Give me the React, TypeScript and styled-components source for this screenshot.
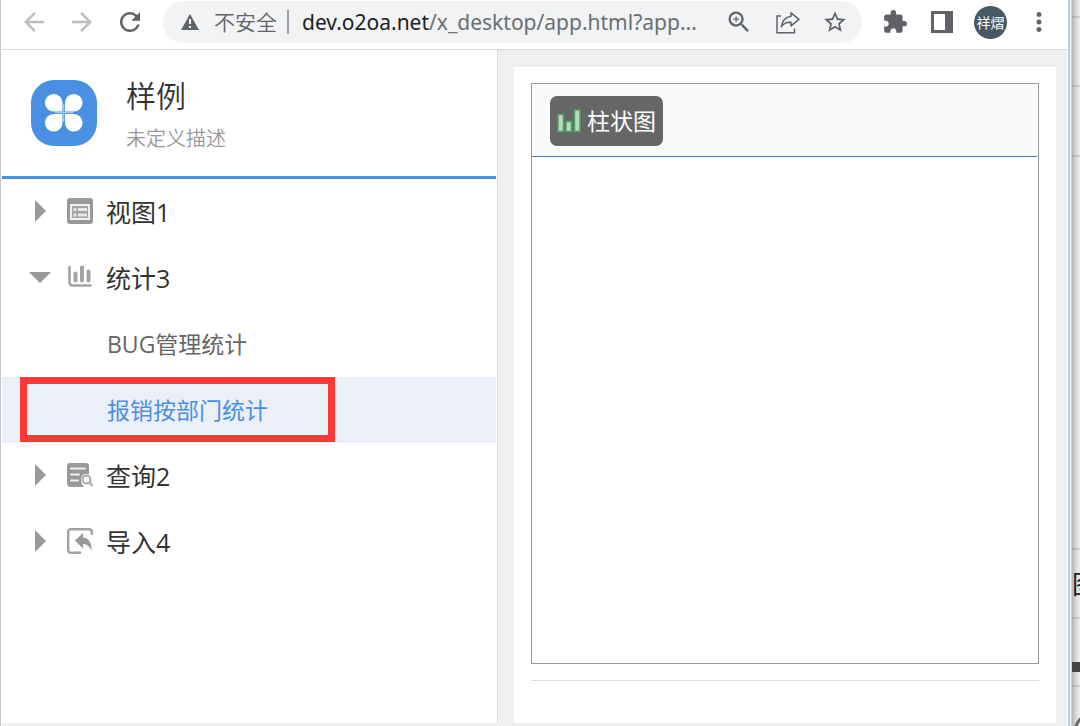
import React from "react";
import styled, { createGlobalStyle } from "styled-components";
import {
  MdArrowBack,
  MdArrowForward,
  MdExtension,
  MdMoreVert,
  MdRefresh,
  MdStarBorder,
  MdZoomIn,
} from "react-icons/md";

const GlobalStyle = createGlobalStyle`
  * { box-sizing: border-box; }
  body {
    margin: 0;
    background: #efefef;
    font-family: "Open Sans", "Noto Sans CJK SC", sans-serif;
    color: #333;
  }
  button { font: inherit; color: inherit; background: none; border: 0; padding: 0; cursor: pointer; }
  svg { display: block; flex: none; }
`;

const Desktop = styled.div`
  display: flex;
  min-height: 100vh;
`;

const Window = styled.div`
  flex: 1;
  min-width: 0;
  display: flex;
  flex-direction: column;
  background: #efefef;
  border-left: 1px solid #c8c8c8;
  box-shadow: inset 1px 0 #fff;
  padding-left: 1px;
`;

const WindowEdge = styled.div`
  flex: 0 0 5px;
  background: linear-gradient(to right, #fff 1px, #a6d4f0 1px 3px, #f4f4f4 3px 4px, #b5dcf2 4px);
`;

const Backdrop = styled.div`
  flex: 0 0 8px;
  height: 100vh;
  overflow: hidden;
  display: flex;
  flex-direction: column;
  background: linear-gradient(to right, #b4b4b4, #d9d9d9 4px, #efefef 8px);
`;

const BackdropCell = styled.div<{ $height: number }>`
  flex: 0 0 ${(p) => p.$height}px;
  display: flex;
  align-items: center;
  overflow: hidden;
  border-bottom: 2px solid rgba(120, 120, 120, 0.25);
  font-size: 26px;
  line-height: 32px;
  color: #222;
  white-space: nowrap;
`;

const BackdropBar = styled.div`
  flex: 1;
  height: 10px;
  margin-top: 30px;
  background: #444;
`;

const BackdropRing = styled.div`
  flex: none;
  width: 32px;
  height: 32px;
  margin: 18px 0 0 2px;
  border: 3px solid #666;
  border-radius: 50%;
`;

const Toolbar = styled.header`
  flex: 0 0 50px;
  display: flex;
  align-items: center;
  gap: 18px;
  padding: 1px 13px 6px 17px;
  background: #fff;
  border-bottom: 1px solid #d9d9d9;
  color: #5f6368;
`;

const IconGroup = styled.div<{ $gap: number }>`
  display: flex;
  align-items: center;
  gap: ${(p) => p.$gap}px;
`;

const IconButton = styled.button`
  width: 30px;
  height: 30px;
  display: flex;
  align-items: center;
  justify-content: center;
  &:disabled { color: #bbbdbf; cursor: default; }
`;

const Avatar = styled.button`
  width: 33px;
  height: 33px;
  border-radius: 50%;
  background: #455a64;
  color: #fff;
  font-size: 14px;
  line-height: 33px;
  white-space: nowrap;
`;

const AddressBar = styled.div`
  flex: 1;
  min-width: 0;
  height: 42px;
  display: flex;
  align-items: center;
  padding: 0 12px 0 17px;
  border-radius: 21px;
  background: #f1f3f4;
  font-size: 21px;
`;

const Security = styled.button`
  flex: none;
  display: flex;
  align-items: center;
  gap: 14px;
  padding-right: 10px;
  border-right: 2px solid #9aa0a6;
  height: 24px;
  font-weight: 350;
  line-height: 24px;
`;

const Url = styled.div`
  flex: 1;
  min-width: 0;
  margin-left: 13px;
  overflow: hidden;
  white-space: nowrap;
  font-family: "Noto Sans", sans-serif;
  line-height: 32px;
  color: #6b6e72;
  b { font-weight: 400; color: #202124; }
`;

const Workspace = styled.div`
  flex: 1;
  display: flex;
  margin-bottom: 3px;
`;

const Sidebar = styled.aside`
  flex: 0 0 496px;
  padding-right: 1px;
  background: #fff;
  border-right: 1px solid #d9d9d9;
`;

const AppHeader = styled.div`
  height: 129px;
  display: flex;
  align-items: center;
  gap: 29px;
  padding: 0 29px;
  border-bottom: 3px solid #4a90e2;
`;

const AppHeading = styled.div`
  padding-top: 8px;
`;

const AppTitle = styled.h1`
  margin: 0;
  font-size: 30px;
  font-weight: 350;
  line-height: 44px;
`;

const AppNote = styled.p`
  margin: 0;
  font-size: 20px;
  font-weight: 350;
  line-height: 42px;
  color: #999;
`;

const Tree = styled.nav`
  display: flex;
  flex-direction: column;
`;

const Branch = styled.button`
  height: 66px;
  display: flex;
  align-items: center;
  padding-left: 27px;
  text-align: left;
  font-size: 25px;
  line-height: 36px;
  color: #333;
`;

const BranchIcon = styled.span`
  margin: 0 13px 0 16px;
`;

const Leaf = styled.button<{ $selected?: boolean }>`
  position: relative;
  height: 66px;
  padding-left: 105px;
  text-align: left;
  font-size: 23px;
  line-height: 36px;
  color: ${(p) => (p.$selected ? "#4a90e2" : "#666")};
  background: ${(p) => (p.$selected ? "#ebeff7" : "transparent")};
`;

const Marker = styled.span`
  position: absolute;
  top: 0;
  left: 18px;
  width: 315px;
  height: 65px;
  border: 7px solid #ff3737;
`;

const Main = styled.main`
  flex: 1;
  min-width: 0;
  display: flex;
  padding: 17px 11px 0 16px;
`;

const Card = styled.section`
  flex: 1;
  min-width: 0;
  display: flex;
  flex-direction: column;
  padding: 16px 17px 42px;
  background: #fff;
`;

const ChartPanel = styled.div`
  flex: 1;
  padding: 1px 1px 0 0;
  border: 1px solid #999;
`;

const ChartTabs = styled.div`
  height: 72px;
  padding: 11px 18px;
  background: #f9f9f9;
  border-bottom: 1px solid #3f7fc0;
`;

const ChartTab = styled.button`
  height: 50px;
  display: flex;
  align-items: center;
  gap: 5px;
  padding: 0 7px;
  border-radius: 7px;
  background: #666;
  color: #fff;
  font-size: 23px;
  line-height: 36px;
`;

const Divider = styled.hr`
  width: 100%;
  margin: 16px 0 0;
  border: 0;
  border-top: 1px solid #ddd;
`;

const WarningIcon = () => (
  <svg width="20" height="20" viewBox="0 0 20 20">
    <path d="M10 2 19 18H1Z" fill="#5f6368" />
    <path d="M9 7h2v5H9zM9 14h2v2H9z" fill="#f1f3f4" />
  </svg>
);

const ShareIcon = () => (
  <svg width="26" height="26" viewBox="0 0 26 26" fill="none" stroke="#5f6368" strokeWidth="1.5">
    <path d="M7 7H3V23.7H20.5V19.5" />
    <path d="M17 3.8 25 10.3 17 16.9V13.3C12.6 13.1 9.6 14.3 7.3 17.8 8.2 11.7 11.2 8.1 17 7.3Z" strokeLinejoin="round" />
  </svg>
);

const PanelIcon = () => (
  <svg width="24" height="24" viewBox="0 0 24 24">
    <path fillRule="evenodd" d="M1 1h22v22H1zM4 4v16h11V4z" fill="#5f6368" />
  </svg>
);

const LogoIcon = () => (
  <svg width="66" height="66" viewBox="0 0 66 66">
    <rect width="66" height="66" rx="23" fill="#4a90e2" />
    <g fill="#fff">
      <path d="M31.5 31.5H22.8A8.8 8.8 0 1 1 31.5 22.8Z" />
      <path d="M34 31.5V22.8A8.8 8.8 0 1 1 42.7 31.5Z" />
      <path d="M31.5 34V42.7A8.8 8.8 0 1 1 22.8 34Z" />
      <path d="M34 34H42.7A8.8 8.8 0 1 1 34 42.7Z" />
    </g>
    <path d="M32.7 24v18M24 32.7h18" stroke="#a4c8f1" strokeWidth="1.2" />
  </svg>
);

const Caret = ({ open }: { open?: boolean }) => (
  <svg width="22" height="24" viewBox="0 0 22 24" fill="#999">
    {open ? <path d="M0 6H22L11 17Z" /> : <path d="M6 0 17 11 6 22Z" />}
  </svg>
);

const ViewIcon = () => (
  <svg width="26" height="28" viewBox="0 0 26 28">
    <rect width="26" height="26" rx="3" fill="#999" />
    <rect x="4" y="7" width="18" height="14" fill="#a3a3a3" stroke="#f0f0f0" strokeWidth="2" />
    <path d="M6.5 10h3v3h-3zM11 10h9v3h-9zM6.5 15.5h3v3h-3zM11 15.5h9v3h-9z" fill="#e8e8e8" />
  </svg>
);

const StatIcon = () => (
  <svg width="26" height="28" viewBox="0 0 26 28" fill="none" stroke="#a3a3a3">
    <path d="M2.5 3V18Q2.5 21.5 6 21.5H23.5" strokeWidth="2.6" strokeLinecap="round" />
    <path d="M8.5 9.5v7M15 3.5v13M21.5 7.5v9" strokeWidth="4" strokeLinecap="round" />
  </svg>
);

const QueryIcon = () => (
  <svg width="26" height="28" viewBox="0 0 26 28" fill="none">
    <path d="M3 1H19Q22 1 22 4V12H18Q14 13 14 18 14 22 17 25H4Q0 25 0 21V4Q0 1 3 1Z" fill="#999" />
    <path d="M4 6.5h14M4 12.5h8M4 18.5h7" stroke="#f0f0f0" strokeWidth="2" strokeLinecap="round" />
    <circle cx="19.5" cy="17.5" r="4" stroke="#aaa" strokeWidth="2" />
    <path d="M22.5 20.5 25.5 24" stroke="#aaa" strokeWidth="2.4" />
  </svg>
);

const ImportIcon = () => (
  <svg width="26" height="28" viewBox="0 0 26 28" fill="none">
    <path d="M24.8 7V4Q24.8 1.2 22 1.2H4Q1.2 1.2 1.2 4V22Q1.2 24.8 4 24.8H14" stroke="#a3a3a3" strokeWidth="2.4" />
    <path d="M8 12.5 16 5V9.5C22 10 25 15 24.5 23 22.5 18 20 16 16 16V20.5Z" fill="#999" />
  </svg>
);

const BarsIcon = () => (
  <svg width="25" height="26" viewBox="0 0 25 26" fill="#b5dfbb" stroke="#559d6b" strokeWidth="1.6">
    <path d="M1 6.5h5.5v17H1zM9 13.5h5.5v10H9zM17.5 2H23v21.5h-5.5z" />
  </svg>
);

export default function App() {
  return (
    <>
      <GlobalStyle />
      <Desktop>
        <Window>
          <Toolbar>
            <IconGroup $gap={18}>
              <IconButton aria-label="后退" disabled><MdArrowBack size={30} /></IconButton>
              <IconButton aria-label="前进" disabled><MdArrowForward size={30} /></IconButton>
              <IconButton aria-label="刷新"><MdRefresh size={30} /></IconButton>
            </IconGroup>
            <AddressBar>
              <Security><WarningIcon />不安全</Security>
              <Url><b>dev.o2oa.net</b>/x_desktop/app.html?app...</Url>
              <IconGroup $gap={18}>
                <IconButton aria-label="缩放"><MdZoomIn size={28} /></IconButton>
                <IconButton aria-label="分享"><ShareIcon /></IconButton>
                <IconButton aria-label="收藏"><MdStarBorder size={26} /></IconButton>
              </IconGroup>
            </AddressBar>
            <IconGroup $gap={17}>
              <IconButton aria-label="扩展程序"><MdExtension size={26} /></IconButton>
              <IconButton aria-label="侧边栏"><PanelIcon /></IconButton>
              <Avatar>祥熠</Avatar>
              <IconButton aria-label="更多"><MdMoreVert size={30} /></IconButton>
            </IconGroup>
          </Toolbar>
          <Workspace>
            <Sidebar>
              <AppHeader>
                <LogoIcon />
                <AppHeading>
                  <AppTitle>样例</AppTitle>
                  <AppNote>未定义描述</AppNote>
                </AppHeading>
              </AppHeader>
              <Tree>
                <Branch><Caret /><BranchIcon><ViewIcon /></BranchIcon>视图1</Branch>
                <Branch aria-expanded><Caret open /><BranchIcon><StatIcon /></BranchIcon>统计3</Branch>
                <Leaf>BUG管理统计</Leaf>
                <Leaf $selected>报销按部门统计<Marker /></Leaf>
                <Branch><Caret /><BranchIcon><QueryIcon /></BranchIcon>查询2</Branch>
                <Branch><Caret /><BranchIcon><ImportIcon /></BranchIcon>导入4</Branch>
              </Tree>
            </Sidebar>
            <Main>
              <Card>
                <ChartPanel>
                  <ChartTabs>
                    <ChartTab><BarsIcon />柱状图</ChartTab>
                  </ChartTabs>
                </ChartPanel>
                <Divider />
              </Card>
            </Main>
          </Workspace>
        </Window>
        <WindowEdge />
        <Backdrop aria-hidden>
          <BackdropCell $height={18} />
          <BackdropCell $height={69} />
          <BackdropCell $height={70} />
          <BackdropCell $height={393} />
          <BackdropCell $height={69}>图</BackdropCell>
          <BackdropCell $height={68}><BackdropBar /></BackdropCell>
          <BackdropCell $height={69}><BackdropRing /></BackdropCell>
        </Backdrop>
      </Desktop>
    </>
  );
}
